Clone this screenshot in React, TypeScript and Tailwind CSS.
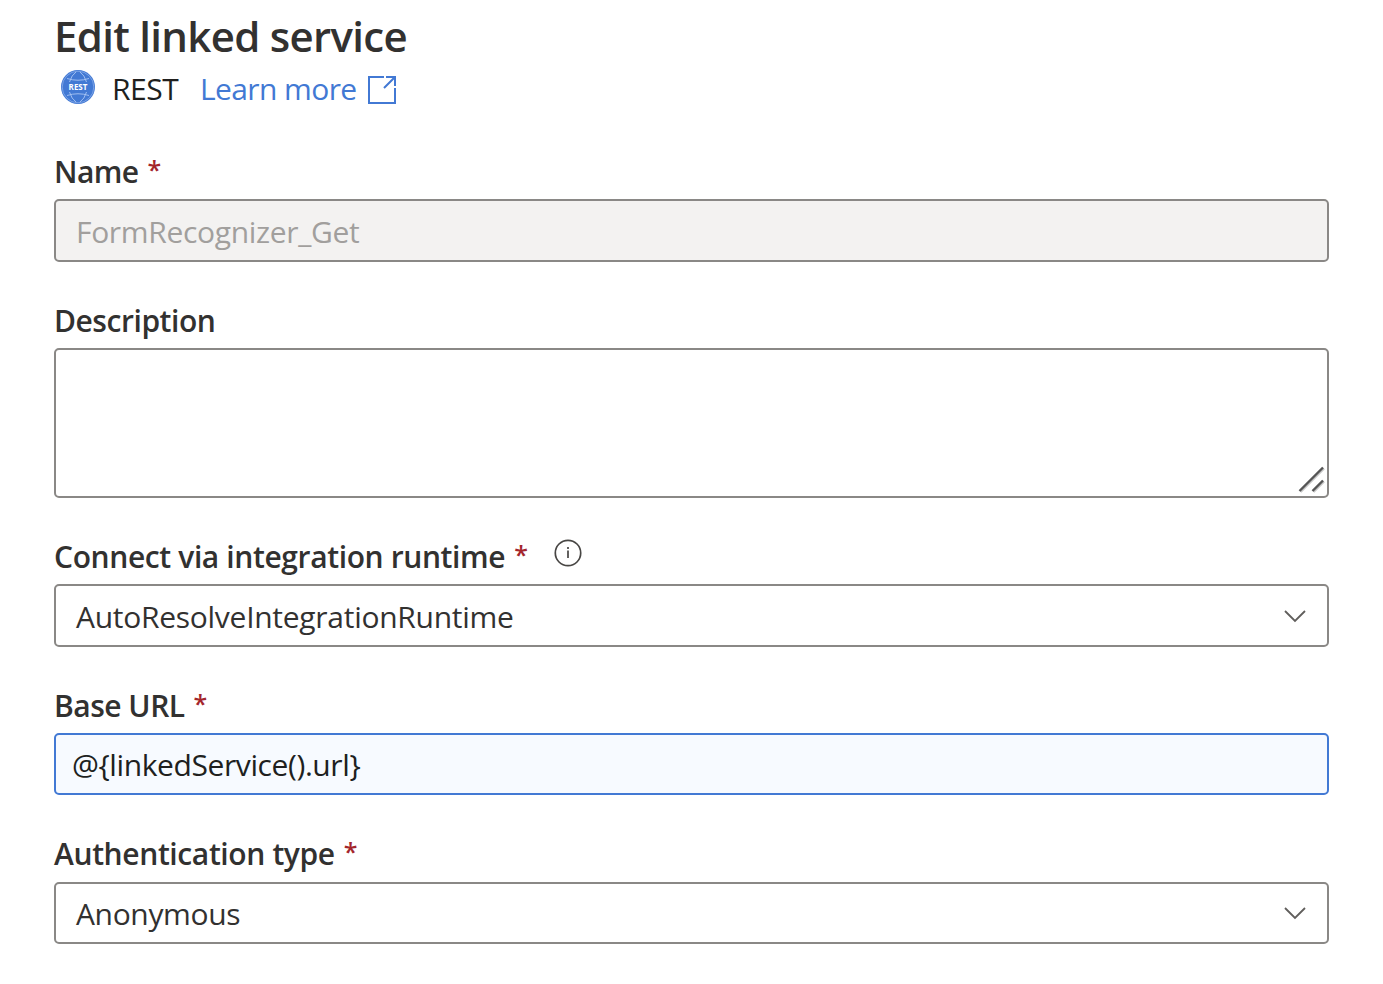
import type { ReactNode } from "react";

function Star() {
  return <span className="ml-[9px] text-[25px] font-semibold leading-[35px] tracking-normal text-[#a4262c]">*</span>;
}

function Label({ children, tracking, extra, required }: { children: ReactNode; tracking: string; extra?: ReactNode; required?: boolean }) {
  return (
    <div className="mb-[7px] flex h-10 items-start whitespace-nowrap text-[30px] font-semibold leading-10 text-[#323130]">
      <span className={tracking}>{children}</span>
      {required && <Star />}
      {extra}
    </div>
  );
}

function Chevron() {
  return (
    <svg className="mr-[20px] h-[14px] w-[24px]" viewBox="0 0 24 14" fill="none" stroke="#605e5c" strokeWidth="1.8">
      <path d="M2 2 L12 12 L22 2" />
    </svg>
  );
}

function RestLogo() {
  return (
    <svg className="h-[34px] w-[34px]" viewBox="0 0 34 34">
      <circle cx="17" cy="17" r="17" fill="#4279d4" />
      <g fill="none" stroke="#a9c5f3" strokeWidth="0.9">
        <circle cx="17" cy="17" r="15.8" strokeOpacity="0.6" />
        <path d="M6 8.500 Q17 12 28 8.500 M6 25.500 Q17 22 28 25.500" />
        <path d="M8.500 12 Q10.500 5 15 2 M25.500 12 Q23.500 5 19 2 M8.500 22 Q10.500 29 15 32 M25.500 22 Q23.500 29 19 32" />
      </g>
      <text x="17" y="19.600" textAnchor="middle" fontSize="8" fontWeight="700" fill="#fff">REST</text>
    </svg>
  );
}

export default function App() {
  return (
    <main className="h-[984px] w-[1383px] overflow-hidden bg-white px-[54px] pt-[6px] font-['Open_Sans','Noto_Sans',sans-serif] text-[#323130]">
      <h1 className="h-[59px] whitespace-nowrap text-[42px] font-semibold leading-[59px] tracking-[-0.7px]">Edit linked service</h1>
      <div className="flex h-[49px] items-start whitespace-nowrap pl-[7px] text-[30px] leading-[48px]">
        <div className="pt-[5px]"><RestLogo /></div>
        <span className="ml-[17px] w-[88px] tracking-[-0.5px] text-[#201f1e]">REST</span>
        <a className="w-[168px] tracking-[-0.6px] text-[#4279d4]">Learn more</a>
        <svg className="mt-[11px] h-[28px] w-[28px]" viewBox="0 0 28 28" fill="none" stroke="#4279d4" strokeWidth="2">
          <path d="M16 1 H1 V27 H27 V12 M18 1 H27 V10 M27 1 L16 12" />
        </svg>
      </div>
      <div className="pt-[38px]">
        <Label tracking="tracking-[-0.6px]" required>Name</Label>
        <div className="flex h-[63px] w-[1275px] items-center rounded-[5px] border-2 border-[#8a8886] bg-[#f3f2f1] pl-5 pt-[2px] text-[30px] text-[#a19f9d]">
          <span className="tracking-[-0.33px]">FormRecognizer_Get</span>
        </div>
      </div>
      <div className="pt-[39px]">
        <Label tracking="tracking-[-0.45px]">Description</Label>
        <div className="flex h-[150px] w-[1275px] items-end justify-end rounded-[5px] border-2 border-[#8a8886]">
          <svg className="mb-[3px] mr-[2px] h-[27px] w-[27px]" viewBox="0 0 27 27" fill="none" strokeWidth="2.4">
            <path d="M2.500 26 L26 2.500 M15.500 26 L26 15.500" stroke="#c8c8c8" />
            <path d="M1.500 25 L25 1.500 M14.500 25 L25 14.500" stroke="#555" />
          </svg>
        </div>
      </div>
      <div className="pt-[39px]">
        <Label tracking="tracking-[-0.38px]" required extra={
          <svg className="ml-[26px] mt-[2px] h-[28px] w-[28px]" viewBox="0 0 28 28" fill="none" stroke="#484644" strokeWidth="1.7">
            <circle cx="14" cy="14" r="12.700" />
            <path d="M14 11.500 V19 M14 8 V10" />
          </svg>
        }>Connect via integration runtime</Label>
        <div className="flex h-[63px] w-[1275px] items-center justify-between rounded-[5px] border-2 border-[#8a8886] pl-5 text-[30px]">
          <span className="pt-[2px] tracking-[-0.28px]">AutoResolveIntegrationRuntime</span>
          <Chevron />
        </div>
      </div>
      <div className="pt-[39px]">
        <Label tracking="tracking-[-0.5px]" required>Base URL</Label>
        <div className="flex h-[62px] w-[1275px] items-center rounded-[5px] border-2 border-[#4279d4] bg-[#f7faff] pl-4 text-[30px] text-[#201f1e]">
          <span className="tracking-[-0.4px]">{"@{linkedService().url}"}</span>
        </div>
      </div>
      <div className="pt-[39px]">
        <Label tracking="tracking-[-0.38px]" required>Authentication type</Label>
        <div className="mt-[8px] flex h-[62px] w-[1275px] items-center justify-between rounded-[5px] border-2 border-[#8a8886] pl-5 text-[30px]">
          <span className="tracking-[-0.35px]">Anonymous</span>
          <Chevron />
        </div>
      </div>
    </main>
  );
}
